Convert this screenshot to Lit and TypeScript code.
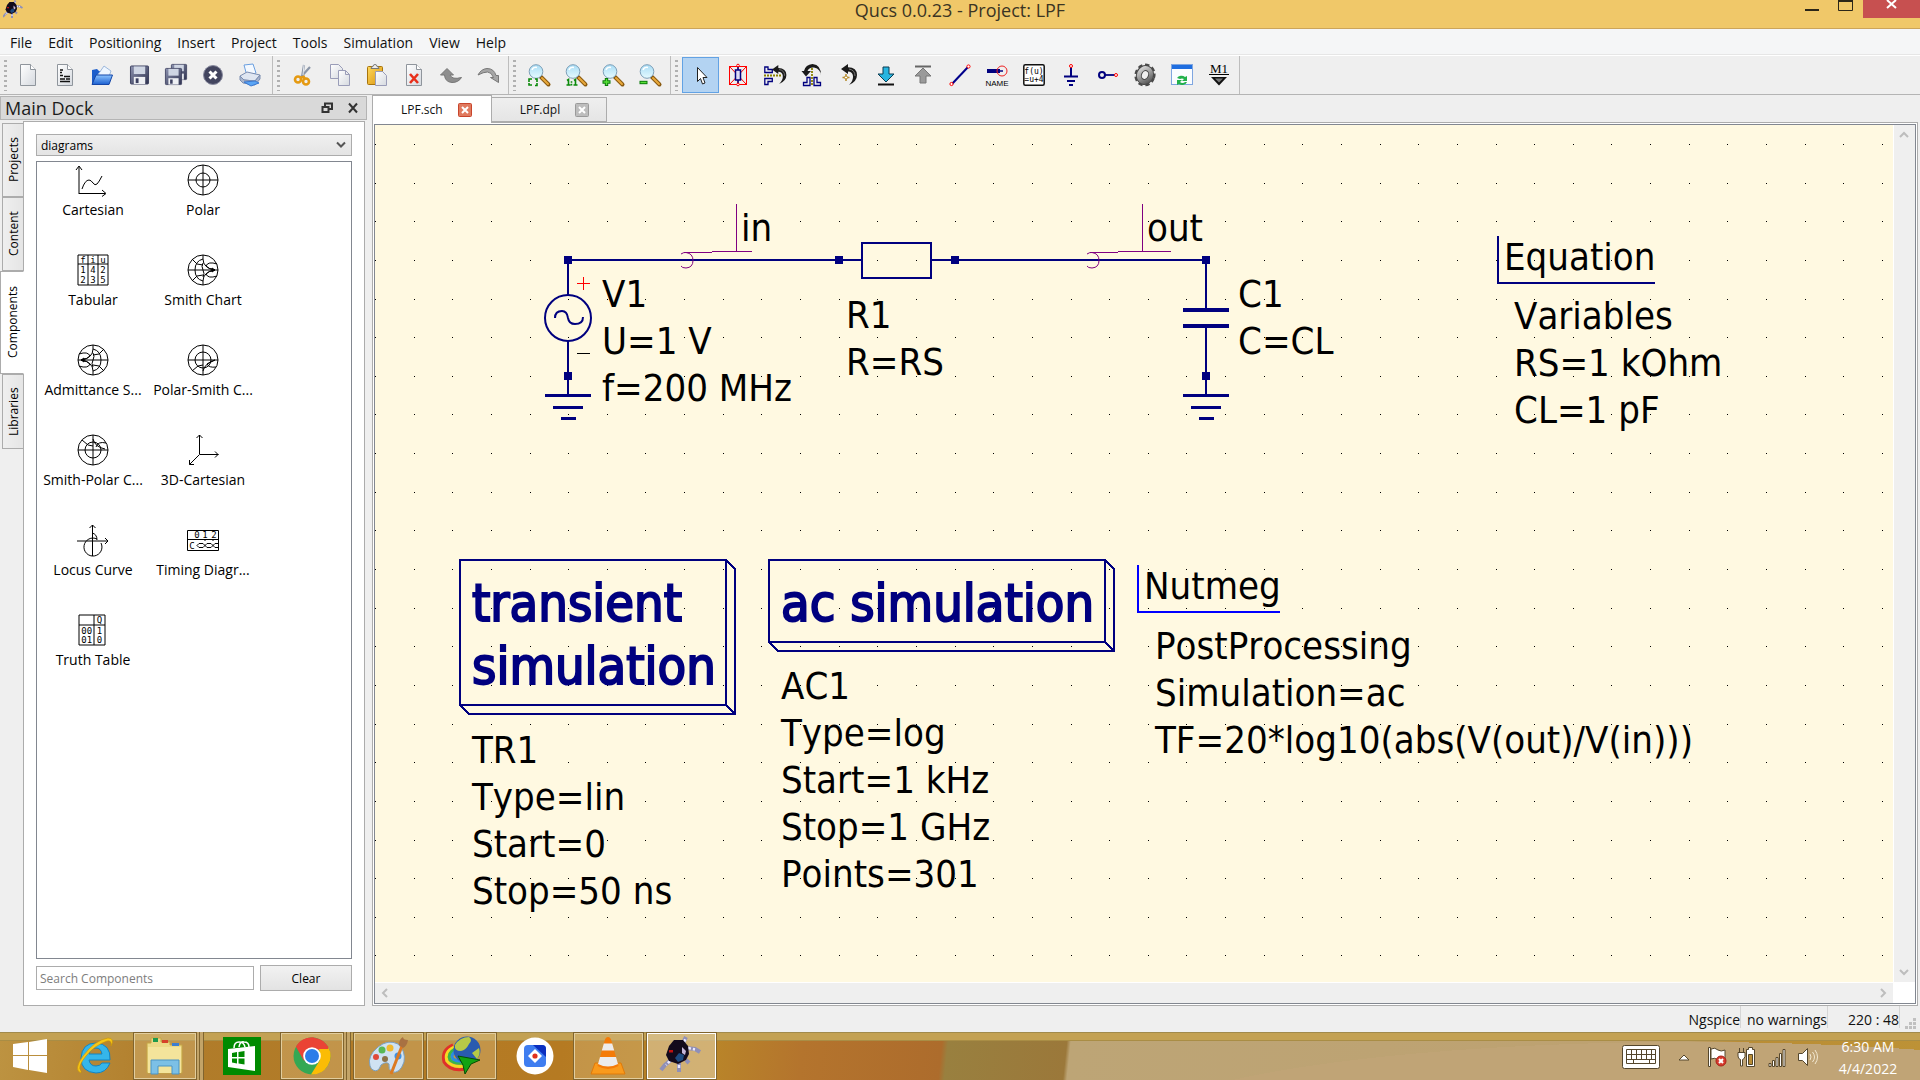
import { LitElement, html, svg, css, TemplateResult } from "lit";
import { customElement, state } from "lit/decorators.js";
import { classMap } from "lit/directives/class-map.js";

type Art = TemplateResult;

/* ---------- shared drawing pieces ---------- */

const page = svg`<path d="M3.5.5h10l5 5v16h-15z" fill="url(#paper)" stroke="#8f959c"/><path d="M13.5.5v5h5" fill="#fff" stroke="#8f959c"/>`;
const lens = svg`
  <path d="M13 13l7.500 7.500" stroke="#8a5a10" stroke-width="4" stroke-linecap="round"/>
  <path d="M14 14l6 6" stroke="#e9a93c" stroke-width="2" stroke-linecap="round"/>
  <circle cx="8" cy="7.500" r="6.800" fill="url(#glass)" stroke="#7d9fb8"/>
  <path d="M4 6a4 4 0 0 1 5-2.500" stroke="#fff" stroke-width="1.500" fill="none"/>`;
const defs = svg`<defs>
  <linearGradient id="paper" x1="0" y1="0" x2="1" y2="1"><stop offset="0" stop-color="#fff"/><stop offset="1" stop-color="#d5d9df"/></linearGradient>
  <linearGradient id="glass" x1="0" y1="0" x2="0" y2="1"><stop offset="0" stop-color="#a8dcf5"/><stop offset="1" stop-color="#e6fbff"/></linearGradient>
  <linearGradient id="disk" x1="0" y1="0" x2="1" y2="1"><stop offset="0" stop-color="#8d93b0"/><stop offset="1" stop-color="#2f3350"/></linearGradient>
  <linearGradient id="sky" x1="0" y1="0" x2="0" y2="1"><stop offset="0" stop-color="#8cc4ff"/><stop offset="1" stop-color="#1b5fd0"/></linearGradient>
  <linearGradient id="gold" x1="0" y1="0" x2="1" y2="1"><stop offset="0" stop-color="#ffd95c"/><stop offset="1" stop-color="#d99410"/></linearGradient>
  <linearGradient id="steel" x1="0" y1="0" x2="1" y2="1"><stop offset="0" stop-color="#ddd"/><stop offset="1" stop-color="#555"/></linearGradient>
</defs>`;
const floppy = (x: number, y: number, s: number) => svg`
  <g transform="translate(${x} ${y}) scale(${s})">
    <rect x=".5" y=".5" width="19" height="19" rx="1" fill="url(#disk)" stroke="#3c4060"/>
    <rect x="4" y="1" width="12" height="8" fill="#cfd6e4"/>
    <rect x="4" y="12" width="12" height="7.500" fill="#eef0f4"/>
    <rect x="6" y="13.500" width="3" height="5" fill="#3c4060"/>
  </g>`;
/* curved arrow: head on the left, tail tapering down on the right */
const curl = svg`<path d="M0 5L7 0v3.200q9 .3 9 7.800 0 6.500-8 10 4.500-4.500 4-9-.6-4.300-5-4.500V10z" fill="#1a1a1a"/><path d="M8 5q6 1 6 7" stroke="#777" fill="none"/>`;

const toolGroups: { label: string; art: Art; on?: boolean }[][] = [
  [
    { label: "New", art: page },
    { label: "New text", art: svg`${page}<path d="M6 6h3M6 8.500h2M6 11.500h3M10 12.500h6M6 15h5M12 15h4M6 17.500h10" stroke="#111" stroke-width="1.500"/>` },
    { label: "Open", art: svg`<path d="M1 20V6l5-1 2 2h10v13z" fill="#1d5ecb"/><path d="M6 12L13 2l7 5-3 8z" fill="#eef6ff" stroke="#9db8dc"/><path d="M1 20.500L5 11h16.500L18 20.500z" fill="url(#sky)" stroke="#1446a8"/>` },
    { label: "Save", art: floppy(2, 1.5, 0.95) },
    { label: "Save all", art: svg`${floppy(6, 0, 0.8)}${floppy(0, 4, 0.85)}` },
    { label: "Close", art: svg`<circle cx="11" cy="11" r="9.500" fill="#43455f" stroke="#8a8ca0"/><path d="M7.500 7.500l7 7M14.500 7.500l-7 7" stroke="#fff" stroke-width="3"/>` },
    { label: "Print", art: svg`<path d="M5 1l9-1 3 9-9 3z" fill="#f4f9ff" stroke="#6a9fe0"/><path d="M1 12l7-4 13 3-5 6-11-1z" fill="#dfe6f1" stroke="#7b8db0"/><path d="M1 12l4 4 11 1 5-6v4l-5 6-12-2-3-3z" fill="#a9b6ce" stroke="#7b8db0"/><path d="M5 18l11-1 4 2-8 3z" fill="#5aa5f5" stroke="#3a78d0"/>` },
  ],
  [
    { label: "Cut", art: svg`<path d="M12 1l-2 12M18 3L8 14" stroke="#8b96a8" stroke-width="2.200"/><path d="M12 1l-1 10" stroke="#e6eaf0"/><g fill="none" stroke="#e59a12" stroke-width="2.600"><circle cx="6" cy="15.500" r="3"/><circle cx="14" cy="17.500" r="3"/><path d="M8 14l5-1.500M11 12l2 3"/></g>` },
    { label: "Copy", art: svg`<path d="M1.500.5h8l4 4v10h-12z" fill="url(#paper)" stroke="#9a9db8"/><path d="M9.500 6.500h7l4 4v11h-11z" fill="url(#paper)" stroke="#9a9db8"/><path d="M16.500 6.500v4h4" fill="none" stroke="#9a9db8"/>` },
    { label: "Paste", art: svg`<rect x="1.500" y="2.500" width="15" height="18" rx="1" fill="url(#gold)" stroke="#a8740c"/><path d="M5 4.500q0-2 2-2 0-2 2-2t2 2q2 0 2 2z" fill="#eee" stroke="#777"/><path d="M9.500 7.500h7l4 4v10h-11z" fill="url(#paper)" stroke="#9a9db8"/>` },
    { label: "Delete", art: svg`${page}<path d="M7 10l8 9M15 10l-8 9" stroke="#e8301c" stroke-width="2.600"/>` },
    { label: "Undo", art: svg`<path d="M.5 11L7 4.500l6.500 6.500h-3.500q2 5 11.500 2.500-3 5-9.500 5-7-.5-7.500-7.500z" fill="#8e8e8e" stroke="#777"/>` },
    { label: "Redo", art: svg`<path d="M21.500 11.500v7l-8-5h3q-2-5.500-6-5.500-4 0-9.500 3 3-6 9-6.500 7 0 9 7z" fill="#a6a6a6" stroke="#777"/>` },
  ],
  [
    { label: "View all", art: svg`${lens}<path d="M1 18v-3h3M7 15h2v3M1 19v2h3M7 21.500h2V19" stroke="#0a8a0a" stroke-width="1.600" fill="none"/>` },
    { label: "View 1:1", art: svg`${lens}<path d="M2 16.500l1.500-1V21M1.500 21h4M9 16.500l1.500-1V21M8.500 21h4M6.500 17.200v1.600M6.500 19.800v1.600" stroke="#0a8a0a" stroke-width="1.600" fill="none"/>` },
    { label: "Zoom in", art: svg`${lens}<path d="M4.500 14v8M.5 18h8" stroke="#0a7a0a" stroke-width="3.400"/><path d="M4.500 15v6M1.500 18h6" stroke="#58e038" stroke-width="1.400"/>` },
    { label: "Zoom out", art: svg`${lens}<path d="M.5 18.500h8" stroke="#0a7a0a" stroke-width="3.400"/><path d="M1.500 18.500h6" stroke="#58e038" stroke-width="1.400"/>` },
  ],
  [
    { label: "Select", on: true, art: svg`<path d="M7.500 3.500v14l3-3 2 5.500 2.500-1-2-5.500h4z" fill="#fff" stroke="#222"/>` },
    { label: "Deactivate", art: svg`<path d="M11 0v5M11 17v5" stroke="#e00"/><rect x="2.500" y="2.500" width="17" height="18" fill="none" stroke="#f00"/><path d="M3 3l16 17M19 3L3 20" stroke="#f00"/><rect x="8.500" y="6" width="5" height="10" fill="#dcdcf5" stroke="#00007f" stroke-width="1.500"/><path d="M11 3v3M11 16v3" stroke="#00007f" stroke-width="1.500"/><circle cx="11" cy="1.500" r="1.300" fill="#fff" stroke="#f00"/><circle cx="11" cy="20.500" r="1.300" fill="#fff" stroke="#f00"/>` },
    { label: "Mirror X", art: svg`<path d="M.8 3v5.500h7.500V5.500H4V3zM.8 20.500v-6h7.500v3H4v3z" fill="none" stroke="#00007f" stroke-width="1.300"/><path d="M0 11.500h17" stroke="#8a8200" stroke-width="1.800" stroke-dasharray="2 1"/><g transform="translate(8 1) scale(.9)">${curl}</g>` },
    { label: "Mirror Y", art: svg`<path d="M2.500 21.500v-3h3.500v-5h3v8zM19.500 21.500v-3H16v-5h-3v8z" fill="none" stroke="#00007f" stroke-width="1.300"/><path d="M11 4v18" stroke="#8a8200" stroke-width="1.800" stroke-dasharray="2 1"/><path d="M20 12q0-7-7-8.500-5-.5-6.500 3.500H10l-5 5.500L.5 7H3q1.500-6.500 8.500-7 9 .8 8.500 12z" fill="#1a1a1a"/>` },
    { label: "Rotate", art: svg`<g transform="translate(3 0)">${curl}</g><path d="M8 10v7M4.500 13.500h7" stroke="#b58a2a" stroke-width="1.500"/><circle cx="8" cy="13.500" r="1.500" fill="#fff" stroke="#b58a2a"/>` },
    { label: "Push into", art: svg`<path d="M8 3h6v7h5l-8 8-8-8h5z" fill="#27b5e0" stroke="#0a3d52"/><path d="M3 20.500h16" stroke="#111" stroke-width="2"/>` },
    { label: "Pop out", art: svg`<path d="M3 2.500h16" stroke="#666" stroke-width="2"/><path d="M11 4l8 8h-5v7H8v-7H3z" fill="#9a9a9a" stroke="#777"/>` },
    { label: "Wire", art: svg`<path d="M3 20L19 3" stroke="#00008b" stroke-width="2"/><circle cx="2.500" cy="20" r="1.600" fill="#fff" stroke="#f00"/><circle cx="19.500" cy="2.500" r="1.600" fill="#fff" stroke="#f00"/>` },
    { label: "Wire label", art: svg`<path d="M1 7h13" stroke="#00007f" stroke-width="4"/><path d="M13 7h4" stroke="#00007f" stroke-width="1.500"/><circle cx="16" cy="7" r="5" fill="none" stroke="#e22"/><text x="11" y="22" font-family="Liberation Sans, sans-serif" font-size="8" text-anchor="middle" fill="#000">NAME</text>` },
    { label: "Equation", art: svg`<rect x=".8" y=".8" width="20.400" height="20.400" rx="1.500" fill="#fff" stroke="#111" stroke-width="1.500"/><text x="11" y="10" font-family="DejaVu Sans Mono, monospace" font-size="8" text-anchor="middle">f(u)</text><text x="11" y="18" font-family="DejaVu Sans Mono, monospace" font-size="8" text-anchor="middle">=u+4</text>` },
    { label: "Ground", art: svg`<path d="M11 3v9M4 12.500h14M7 17h8M9 21h4" stroke="#00007f" stroke-width="2" fill="none"/><circle cx="11" cy="2" r="1.500" fill="#fff" stroke="#f00"/>` },
    { label: "Port", art: svg`<path d="M8 11h10" stroke="#00007f" stroke-width="1.800"/><circle cx="5" cy="11" r="3" fill="none" stroke="#00007f" stroke-width="2"/><circle cx="19" cy="11" r="1.500" fill="#fff" stroke="#f00"/>` },
    { label: "Simulate", art: svg`<g transform="rotate(20 11 11)"><ellipse cx="11" cy="11" rx="8.500" ry="9.500" fill="none" stroke="#4a4a4a" stroke-width="4" stroke-dasharray="4 2.500"/><ellipse cx="11" cy="11" rx="6" ry="7" fill="none" stroke="#4a4a4a" stroke-width="6"/><ellipse cx="11" cy="11" rx="6" ry="7" fill="none" stroke="url(#steel)" stroke-width="4"/></g>` },
    { label: "View data", art: svg`<rect x=".5" y=".5" width="21" height="20" fill="#fafcff" stroke="#7fa6e0"/><rect x="1" y="1" width="20" height="4" fill="#1f6ee0"/><path d="M6 14a5 4 0 0 1 8-1l2-1v5h-5l2-2a3 2 0 0 0-4 0zM16 18a5 4 0 0 1-8 2l-2 1v-5h5l-2 2a3 2 0 0 0 5 0z" fill="#22b14c"/>` },
    { label: "Marker", art: svg`<text x="11" y="9" font-family="Liberation Serif, serif" font-size="13" text-anchor="middle">M1</text><path d="M1 10.500h20" stroke="#000"/><path d="M3 13h16l-8 8.500z" fill="#111"/><path d="M7 14.500h8l-4 4z" fill="#777"/>` },
  ],
];

const ring = svg`<circle cx="16" cy="16" r="15"/>`;
const cross = svg`<path d="M1 16h30M16 1v30"/>`;
const smith = svg`${ring}<path d="M1 16h30M25 14l3 2-3 2z"/><path d="M16 1v4M16 27v4M16 5q-8 2-8 11t8 11M16 9q-2 3 0 7t0 7M5 5l5 5 6 1M5 27l5-5 6-1M16 5q0 9 12 11M16 27q0-9 12-11M30 10q-9-3-11 2 2 3 9 4M30 22q-9 3-11-2 2-3 9-4"/>`;
const tiny = (x: number, y: number, t: string) => svg`<text x=${x} y=${y}>${t}</text>`;
const diagrams: { name: string; art: Art }[] = [
  { name: "Cartesian", art: svg`<path d="M2 30V3M-1 6l3-4 3 4M2 29.500h26M25 26l4 3.500-4 3M5 25q3-9 7-9 2 0 4 3t4 1 5-8"/>` },
  { name: "Polar", art: svg`${ring}<circle cx="16" cy="16" r="7"/>${cross}` },
  { name: "Tabular", art: svg`<path d="M1 1h30v30H1zM1 10h30M11 1v30M21 1v30"/>${[["f", "i", "u"], ["1", "4", "2"], ["2", "3", "5"]].map((r, j) => r.map((t, i) => tiny(6 + i * 10, [8.5, 19, 29][j], t)))}` },
  { name: "Smith Chart", art: smith },
  { name: "Admittance S...", art: svg`<g transform="matrix(-1 0 0 1 32 0)">${smith}</g>` },
  { name: "Polar-Smith C...", art: svg`${ring}<circle cx="16" cy="16" r="8"/>${cross}<path d="M5 27l6-5 5-1M16 27q2-8 12-11M29 23q-7 1-9-3l8-4"/>` },
  { name: "Smith-Polar C...", art: svg`${ring}<circle cx="16" cy="16" r="8"/>${cross}<path d="M5 6l6 5 5 1M16 5q2 8 12 10M29 9q-8-2-10 4"/>` },
  { name: "3D-Cartesian", art: svg`<path d="M12.500 20V1M9.500 4l3-3 3 3M12.500 20.500h19M28 17.500l3 3-3 3M12.500 20.500l-10 10M2.500 26v4.500H7"/>` },
  { name: "Locus Curve", art: svg`<path d="M15.500 32V1M12.500 4l3-3 3 3M0 17h31M28 14l3 3-3 3"/><path d="M20 15a9 9 0 1 0 4 4M20 16q0-6-5-7"/>` },
  { name: "Timing Diagr...", art: svg`<path d="M.5 6.500h31v20H.5zM.5 15.500h31M10 21.500l2-2h4l4 4h4l4-4h3M10 21.500l2 2h4l4-4h4l4 4h3M18 15v2M26 15v2"/>${tiny(10, 14, "0")}${tiny(18, 14, "1")}${tiny(27, 14, "2")}${tiny(5, 25, "C")}` },
  { name: "Truth Table", art: svg`<path d="M2 1h26v30H2zM2 11h26M17 1v30"/>${tiny(22.5, 9, "Q")}${tiny(7, 20, "0")}${tiny(12.5, 20, "0")}${tiny(22.5, 20, "1")}${tiny(7, 29, "0")}${tiny(12.5, 29, "1")}${tiny(22.5, 29, "0")}` },
];

const spider = svg`
  <path d="M22 7l3-6M25 12l9 1 5 3M10 24l-6 5-4 5M18 26v10M25 24l3 3" stroke="#8f8fb8" stroke-width="4" fill="none"/>
  <path d="M23 6l2-4M27 12l7 1.500M9 25l-4 4M18 29v5" stroke="#eceaff" stroke-width="2.500" stroke-dasharray="3 2" fill="none"/>
  <path d="M8 10l5-6h9l5 6 1 8-3 6-8 4-9-3-3-6z" fill="#130a1c"/>
  <path d="M14 22l4-5 5 2-1 5-5 2z" fill="#1d4a80"/><path d="M21 11l4 4-1 4-3-2z" fill="#c5b6d8"/>
  <rect x="8" y="14" width="4" height="2.500" fill="#c01010"/>`;

/* ---------- dock with the component palette ---------- */

@customElement("main-dock")
class MainDock extends LitElement {
  @state() private tab = "Components";

  static styles = css`
    :host { display: flex; flex-direction: column; font: 12px "Open Sans", sans-serif; color: #000; }
    button, input, select { font: inherit; color: inherit; }
    .title { display: flex; align-items: center; height: 22px; padding: 0 0 0 4px; border: 1px solid #b4b4b4; background: #d9d9d9; font-size: 18px; line-height: 22px; color: #1c1c1c; }
    .title span { flex: 1; }
    .title button { width: 26px; height: 18px; padding: 0; border: 0; background: none; display: grid; place-items: center; }
    .title svg { width: 12px; height: 12px; fill: none; stroke: #333; stroke-width: 2; }
    .body { flex: 1; display: flex; min-height: 0; margin-right: 2px; padding-top: 1px; }
    .tabs { display: flex; flex-direction: column; width: 24px; padding-top: 2px; margin-right: -1px; z-index: 1; }
    .tab { writing-mode: vertical-rl; transform: rotate(180deg); height: 74px; width: 22px; margin-left: 2px; padding: 0; border: 1px solid #acacac; background: linear-gradient(90deg, #e5e5e5, #efefef); line-height: 19px; text-align: center; }
    .tab.on { width: 24px; height: 103px; margin-left: 0; background: #fff; border-left-color: #fff; }
    .tab.last { height: 75px; }
    .panel { flex: 1; display: flex; flex-direction: column; min-width: 0; border: 1px solid #acacac; background: #fff; padding: 12px; }
    .pick { position: relative; display: flex; margin-bottom: 5px; }
    .pick select { flex: 1; height: 22px; padding: 0 4px; border: 1px solid #acacac; border-radius: 0; appearance: none; background: linear-gradient(#f0f0f0, #e4e4e4); }
    .pick svg { position: absolute; right: 6px; top: 7px; width: 10px; height: 8px; fill: none; stroke: #555; stroke-width: 2; pointer-events: none; }
    .list { flex: 1; display: grid; grid-template-columns: repeat(auto-fill, 110px); grid-auto-rows: 90px; align-content: start; padding-left: 1px; border: 1px solid #828790; overflow: hidden; }
    .item { display: flex; flex-direction: column; align-items: center; gap: 4px; padding: 2px 0 0; border: 0; background: none; font-size: 14px; line-height: 20px; white-space: nowrap; }
    .item svg { width: 32px; height: 32px; overflow: visible; fill: none; stroke: #000; stroke-width: 1; }
    .item text { font: 9px "DejaVu Sans Mono", monospace; text-anchor: middle; fill: #000; stroke: none; }
    .find { display: flex; align-items: center; gap: 6px; padding-top: 6px; margin-bottom: 2px; }
    .find input { flex: 1; min-width: 0; height: 24px; box-sizing: border-box; padding: 0 3px; border: 1px solid #acacac; }
    .find input::placeholder { color: #7d7d7d; opacity: 1; }
    .find button { width: 92px; height: 26px; padding: 0; border: 1px solid #acacac; background: linear-gradient(#f2f2f2, #e3e3e3); }
  `;

  render() {
    const tabs = ["Projects", "Content", "Components", "Libraries"];
    return html`
      <div class="title">
        <span>Main Dock</span>
        <button aria-label="Float"><svg viewBox="0 0 12 12"><path d="M4 4V1.500h7V7H8M1.500 5h6v5h-6z"/></svg></button>
        <button aria-label="Close dock"><svg viewBox="0 0 12 12"><path d="M2 1.500l8 9M10 1.500l-8 9"/></svg></button>
      </div>
      <div class="body">
        <div class="tabs" role="tablist">
          ${tabs.map((t) => html`<button role="tab" aria-selected=${this.tab === t} class=${classMap({ tab: true, on: this.tab === t, last: t === "Libraries" })} @click=${() => (this.tab = t)}>${t}</button>`)}
        </div>
        <div class="panel">
          <div class="pick">
            <select aria-label="Component group"><option>diagrams</option></select>
            <svg viewBox="0 0 10 8"><path d="M1 1.500l4 4 4-4"/></svg>
          </div>
          <div class="list">
            ${diagrams.map((d) => html`<button class="item"><svg viewBox="0 0 32 32">${d.art}</svg>${d.name}</button>`)}
          </div>
          <div class="find">
            <input type="text" aria-label="Search Components" placeholder="Search Components" />
            <button>Clear</button>
          </div>
        </div>
      </div>`;
  }
}

/* ---------- schematic canvas ---------- */

const GRID = 38.64;
const gridDots = (() => {
  let d = "";
  for (let j = 0; j < 60; j++)
    for (let i = 0; i < 100; i++) d += `M${Math.round(i * GRID)} ${Math.round(19 + j * GRID)}h1v1h-1z`;
  return d;
})();

const lines = (x: number, y: number, rows: string[]) => rows.map((r, i) => svg`<text x=${x} y=${y + i * 47}>${r}</text>`);
const node = (x: number, y: number) => svg`<rect class="node" x=${x - 4} y=${y - 4} width="8" height="8"/>`;
const ground = (x: number) => svg`<path class="bar3" d="M${x - 23} 395.500h46M${x - 15} 407.500h30M${x - 7} 418.500h15"/>`;
const netLabel = (x: number, y: number, end: number, name: string) => svg`
  <path class="net" d="M${x}.5 204v47M${x - 24} 251.500H${end}M${x - 52} 252.500h28"/>
  <path class="net round" d="M${x - 55} 254q3-2 5-1.500 7 1 7 8t-7 7.500q-4 0-5-2"/>
  <text x=${x + 5} y=${y}>${name}</text>`;
const box = (x: number, y: number, w: number, h: number) => svg`
  <path class="wire" d="M${x} ${y}h${w}v${h}h-${w}zM${x + w} ${y}l9 9v${h}h-${w}l-9-9M${x + w} ${y + h}l9 9"/>`;

@customElement("schematic-view")
class SchematicView extends LitElement {
  static styles = css`
    :host { display: grid; grid-template-columns: minmax(0, 1fr) 21px; grid-template-rows: minmax(0, 1fr) 20px; gap: 1px; background: #fff; border: 1px solid #828790; }
    .canvas { display: block; width: 100%; height: 100%; background: #fff9e1; shape-rendering: crispEdges; }
    text { font: 38px "DejaVu Sans Condensed", "Open Sans", sans-serif; font-kerning: none; fill: #000; }
    .big text { font-size: 52px; fill: #00007f; stroke: #00007f; stroke-width: 2px; }
    .wire { fill: none; stroke: #00007f; stroke-width: 2; }
    .bar3 { fill: none; stroke: #00007f; stroke-width: 3; }
    .bar4 { fill: none; stroke: #00007f; stroke-width: 4; }
    .node { fill: #00007f; }
    .net { fill: none; stroke: #800080; stroke-width: 1; }
    .round { shape-rendering: auto; }
    .blue { fill: none; stroke: #0000ff; stroke-width: 2; }
    .scroll { display: flex; justify-content: space-between; background: #efefef; }
    .v { flex-direction: column; }
    .scroll button { width: 20px; height: 20px; padding: 0; border: 0; background: none; display: grid; place-items: center; }
    .scroll svg { width: 10px; height: 10px; fill: none; stroke: #bdbdbd; stroke-width: 2; }
  `;

  render() {
    const arrow = (label: string, d: string) => html`<button aria-label=${label}><svg viewBox="0 0 10 10"><path d=${d}/></svg></button>`;
    return html`
      <svg class="canvas">
        <path d=${gridDots} fill="#000"/>
        <g transform="translate(-375 -125)">
          <path class="wire" d="M568 260H862M931 260H1206M862 243h69v35h-69zM568 260v35M568 341v54M1206 260v49M1206 327v68"/>
          <circle class="wire round" cx="568" cy="318" r="23"/>
          <path class="wire round" d="M555 318q0-7 7-7 5 0 6 7 1 6 7 6 8 0 8-7"/>
          <path d="M577 283.500h13M583.500 277v13" stroke="#f00"/>
          <path d="M577 353.500h13" stroke="#000"/>
          ${node(568, 260)}${node(568, 376)}${node(839, 260)}${node(955, 260)}${node(1206, 260)}${node(1206, 376)}
          <path class="bar4" d="M1183 310h46M1183 326h46"/>
          ${ground(568)}${ground(1206)}
          ${netLabel(736, 241, 752, "in")}${netLabel(1142, 241, 1171, "out")}
          ${lines(602, 307, ["V1", "U=1 V", "f=200 MHz"])}
          ${lines(846, 328, ["R1", "R=RS"])}
          ${lines(1238, 307, ["C1", "C=CL"])}
          <path class="wire" d="M1498 236v47h157"/>
          ${lines(1504, 270, ["Equation"])}
          ${lines(1514, 329, ["Variables", "RS=1 kOhm", "CL=1 pF"])}
          ${box(460, 560, 266, 145)}${box(769, 560, 336, 82)}
          <g class="big">
            <text x="472" y="621">transient</text>
            <text x="472" y="684">simulation</text>
            <text x="781" y="621">ac simulation</text>
          </g>
          ${lines(472, 763, ["TR1", "Type=lin", "Start=0", "Stop=50 ns"])}
          ${lines(781, 699, ["AC1", "Type=log", "Start=1 kHz", "Stop=1 GHz", "Points=301"])}
          <path class="blue" d="M1138 565v47h142"/>
          ${lines(1144, 599, ["Nutmeg"])}
          ${lines(1155, 659, ["PostProcessing", "Simulation=ac", "TF=20*log10(abs(V(out)/V(in)))"])}
        </g>
      </svg>
      <div class="scroll v">${arrow("Up", "M1 7l4-4 4 4")}${arrow("Down", "M1 3l4 4 4-4")}</div>
      <div class="scroll">${arrow("Left", "M7 1L3 5l4 4")}${arrow("Right", "M3 1l4 4-4 4")}</div>`;
  }
}

/* ---------- desktop task bar ---------- */

const tasks: { name: string; look: string; art: Art }[] = [
  { name: "Internet Explorer", look: "", art: svg`<path d="M35 24H14q1 6 7 6 4 0 6-3h8q-4 10-14 10Q6 36 6 22 7 7 21 7q15 1 14 17zM14 18h13q-1-6-6-6t-7 6z" fill="#35b6ea" stroke="#1583c0"/><path d="M6 37Q-2 34 8 20 20 4 33 2q7 0 3 8 1-6-4-5-12 4-21 15T6 35z" fill="#f8c716" stroke="#c99305" stroke-width=".6"/>` },
  { name: "File Explorer", look: "open stack", art: svg`<path d="M2 7h4V2h10v4h9v3h12v28H2z" fill="#ecd987" stroke="#c4a544"/><path d="M8 2h5v4H8z" fill="#1d9a4d"/><path d="M17 4h6v3h-6z" fill="#d6412a"/><path d="M27 7h7v3h-7z" fill="#3d7ed0"/><path d="M3 11h33v26H3z" fill="#f4e49b"/><path d="M6 38V24h28v14h-7v-8H13v8z" fill="#7cc0e6" stroke="#4a94c4"/>` },
  { name: "Store", look: "", art: svg`<rect x="1" y="1" width="38" height="38" fill="#008a00"/><path d="M6 13l27-3v25L6 31z" fill="#fff"/><path d="M12 12q0-6 5-6t6 5M17 11q1-6 5-5 5 0 5 5" fill="none" stroke="#fff" stroke-width="1.500"/><path d="M10 17l5-1v5h-5zM16.500 16l6-1v6h-6zM10 22.500h5v5l-5-1zM16.500 22.500h6v6l-6-1z" fill="#008a00"/>` },
  { name: "Chrome", look: "open stack", art: svg`<circle cx="20" cy="20" r="18.500" fill="#34a853"/><path d="M4 10.800A18.500 18.500 0 0 1 36 10.800L28 14H20z" fill="#ea4335"/><path d="M4 10.800A18.500 18.500 0 0 1 20 1.500h2L20 12l-8 13z" fill="#ea4335"/><path d="M36 10.800A18.500 18.500 0 0 1 19 38.500L28 24l-1-12z" fill="#fbbc05"/><path d="M20 11.500h16.200" stroke="#ea4335" stroke-width="3"/><circle cx="20" cy="20" r="8.800" fill="#fff"/><circle cx="20" cy="20" r="7" fill="#2b7de9"/>` },
  { name: "Paint", look: "open", art: svg`<path d="M2 30Q-1 20 10 11q10-8 20-3 8 7 6 18-4 12-12 10-4-3-3-8-3-3-8 1-3 8-8 5-2-1-3-4z" fill="#cfe2f2" stroke="#7ba0bf"/><circle cx="8" cy="21" r="3" fill="#e04a3a"/><circle cx="14" cy="14" r="3.500" fill="#59b856"/><circle cx="22" cy="12" r="3.500" fill="#f1b92e"/><circle cx="30" cy="20" r="3.500" fill="#3f8fe0"/><circle cx="17" cy="23" r="3" fill="#8d7247"/><path d="M23 38L34 10" stroke="#dc7a22" stroke-width="3"/><path d="M31 9q0-6 4-8 0 3 5 3-1 6-5 8z" fill="#a87142"/>` },
  { name: "Download Manager", look: "open", art: svg`<path d="M12 9Q0 14 3 26q6 10 22 7" fill="none" stroke="#e0302a" stroke-width="3"/><path d="M13 11Q3 16 6 25q5 7 18 5" fill="none" stroke="#f6d822" stroke-width="3"/><path d="M14 13Q6 17 9 24q4 4 15 3" fill="none" stroke="#3ab54a" stroke-width="3"/><path d="M15 15q-6 4-3 8 4 3 12 2" fill="none" stroke="#2a8de0" stroke-width="3"/><circle cx="26" cy="14" r="13.500" fill="#2a5bb0"/><path d="M14 9q5-8 14-8 4 3 0 7-3 6-8 7-7 0-6-6zM31 17l7-5q2 6-2 11z" fill="#b7c947"/><path d="M17 20l22 4-9 4-6 10-2-9z" fill="#12a312" stroke="#064d06"/>` },
  { name: "Player", look: "", art: svg`<circle cx="20" cy="20" r="18.500" fill="#fff"/><rect x="9" y="9" width="22" height="22" rx="4" fill="#3f7df0"/><path d="M18 9h9q4 0 4 4v8z" fill="#0b2fc0"/><path d="M20 13l7 7-7 7-7-7z" fill="#fff"/><circle cx="20" cy="20" r="2.600" fill="#e0301e"/>` },
  { name: "VLC", look: "open", art: svg`<path d="M7 27h26l4 11H3z" fill="#f99a1c" stroke="#e07a08"/><path d="M20 1q2.500 0 3.500 4l7 25q-10.500 6-21 0l7-25q1-4 3.500-4z" fill="#f47b08"/><path d="M15.800 7.500h8.400l2 7H13.800zM12 21h16l2 7q-10 5-20 0z" fill="#ececec"/>` },
  { name: "Qucs", look: "open active", art: spider },
];

@customElement("task-bar")
class TaskBar extends LitElement {
  static styles = css`
    :host { display: flex; align-items: stretch; height: 48px; color: #fff; font: 14px/22px "Open Sans", sans-serif;
      background: linear-gradient(#a18a4c 0 1px, #c3a153 1px 8px, #a98d45 8px 9px, transparent 9px),
        radial-gradient(ellipse 560px 90px at 1690px 100px, #c0a476 0 100%, transparent 100%) 0 0 no-repeat,
        linear-gradient(96deg, #bd9341 0, #b07c2a 180px, #b57a22 560px, #b98529 710px, #b4742d 800px, #ad6c2c 938px, #99803f 944px, #9b783a 1062px, #bda576 1066px, #bda170 1680px, #b98d35 1730px, #bd9236 100%); }
    button { border: 0; padding: 0; background: none; font: inherit; color: inherit; }
    svg { display: block; }
    .start { width: 59px; display: grid; place-items: center; }
    .start svg { width: 34px; height: 34px; fill: #fff; }
    .task { width: 74px; display: grid; place-items: center start; padding-left: 16px; box-sizing: border-box; }
    .task svg { width: 40px; height: 40px; overflow: visible; }
    .open { width: 71px; margin-right: 2px; padding-left: 14px; border: 1px solid #80642e; box-shadow: inset 0 0 0 1px #e2cd9d; background: #d9bb8066; }
    .stack { width: 64px; margin-right: 9px; padding-left: 11px; box-shadow: inset 0 0 0 1px #e2cd9d, 2px 0 0 #c3a468, 3px 0 0 #80642e, 6px 0 0 #c3a468, 7px 0 0 #80642e; }
    .active { background: #dec79aaa; box-shadow: inset 0 0 0 1px #fff; }
    .fill { flex: 1; }
    .tray { display: flex; align-items: center; gap: 12px; padding-top: 2px; }
    .tray svg { overflow: visible; fill: #fff; stroke: #54462c; stroke-width: 1; }
    .tray .kbd { width: 38px; height: 24px; margin-right: 6px; }
    .tray .up { width: 12px; height: 8px; margin-right: 6px; }
    .tray .sm { width: 18px; height: 22px; }
    .clock { width: 104px; text-align: center; padding: 4px 0 0; align-self: start; }
    .clock span { display: block; }
  `;

  render() {
    return html`
      <button class="start" aria-label="Start"><svg viewBox="0 0 34 34"><path d="M0 5l15-2v13H0zM16 3l18-3v16H16zM0 17h15v14L0 28zM16 17h18v17l-18-3z"/></svg></button>
      ${tasks.map((t) => html`<button class="task ${t.look}" aria-label=${t.name}><svg viewBox="0 0 40 40">${t.art}</svg></button>`)}
      <div class="fill"></div>
      <div class="tray">
        <svg class="kbd" viewBox="0 0 38 24"><rect x=".5" y=".5" width="37" height="23" rx="2"/><path d="M4.500 4.500h29v14h-29zM4.500 9.500h29M4.500 14.500h29M9.500 4v10M14.500 4v10M19.500 4v10M24.500 4v10M29.500 4v10M11.500 14v5M27.500 14v5"/></svg>
        <svg class="up" viewBox="0 0 12 8"><path d="M1 7l5-5 5 5z"/></svg>
        <svg class="sm" viewBox="0 0 18 22"><path d="M.5 1.500h2v19h-2zM3 3q4-2 7 1 3 2 7 0v10q-4 2-7 0-3-3-7-1z"/><circle cx="13" cy="15" r="5" fill="#d63a2e" stroke="#a92318"/><path d="M11 13l4 4M15 13l-4 4" stroke="#fff" stroke-width="2"/></svg>
        <svg class="sm" viewBox="0 0 18 22"><path d="M8.500 3.500h2v-2h4v2h2v17h-8z"/><path d="M10.500 8.500h4v10h-4z" fill="#b98d35"/><path d="M1.500 6V2M5.500 6V2M0 6.500h7v4q-1 3-2.500 3V20h-2v-6.500Q0 13 0 10z"/></svg>
        <svg class="sm" viewBox="0 0 18 22"><path d="M1 17.500h2v3H1zM4.500 14.500h2v6h-2zM8 11.500h2v9H8zM11.500 7.500h2v13h-2zM15 3.500h2v17h-2z"/></svg>
        <svg class="sm" viewBox="0 0 18 22"><path d="M.5 7.500h4l5-5v17l-5-5h-4z"/><path d="M12 8q2 3 0 6M14.500 6q4 5 0 10M17 4q5 7 0 14" fill="none" stroke="#f3e9d2"/></svg>
      </div>
      <div class="clock"><span>6:30 AM</span><span>4/4/2022</span></div>`;
  }
}

/* ---------- application window ---------- */

@customElement("app-root")
class AppRoot extends LitElement {
  @state() private doc = "LPF.sch";

  static styles = css`
    :host { display: flex; flex-direction: column; height: 100vh; overflow: hidden; background: #efefef; color: #111; font: 14px "Open Sans", sans-serif; }
    button { font: inherit; color: inherit; padding: 0; border: 0; background: none; }
    svg { display: block; }
    .titlebar { display: grid; grid-template-columns: 1fr auto 1fr; height: 28px; border-bottom: 1px solid #cca55a; background: #f0c869; }
    .titlebar .logo { width: 20px; height: 20px; margin: 0 3px; }
    .titlebar h1 { margin: 0; font-size: 18px; line-height: 20px; font-weight: 400; color: #3b3423; }
    .win { display: flex; justify-content: flex-end; }
    .win button { width: 33px; height: 18px; }
    .win .x { width: 57px; background: #c75050; }
    .win svg { width: 100%; height: 18px; fill: none; stroke: #2b2618; stroke-width: 2; }
    .menu { display: flex; height: 25px; padding-left: 2px; border-bottom: 1px solid #e6e6e6; background: #f5f6f7; }
    .menu button { padding: 0 8px; line-height: 28px; height: 25px; display: flex; }
    .tools { display: flex; height: 38px; border-top: 1px solid #fff; border-bottom: 1px solid #b4b4b4; }
    .group { display: flex; align-items: center; padding-right: 2px; border-right: 1px solid #bdbdbd; }
    .group::before { content: ""; width: 3px; height: 31px; margin: 0 4px; background: repeating-linear-gradient(#b0b0b0 0 2px, transparent 2px 5px); }
    .group:first-child { padding-right: 4px; }
    .group:first-child::before { margin-right: 2px; }
    .tool { width: 37px; height: 36px; display: grid; place-items: center; }
    .tool svg { width: 22px; height: 22px; overflow: visible; }
    .tool.on { box-shadow: inset 0 0 0 1px #62a2e4; background: #b3d3f2; }
    .work { flex: 1; display: flex; min-height: 0; gap: 5px; padding-right: 2px; }
    main-dock { width: 367px; padding-top: 1px; }
    .docs { flex: 1; min-width: 0; display: flex; flex-direction: column; }
    .doctabs { display: flex; align-items: flex-end; height: 27px; z-index: 1; }
    .doctab { display: flex; align-items: center; height: 25px; padding: 0 17px 0 28px; gap: 15px; border: 1px solid #acacac; border-left: 0; background: linear-gradient(#efefef, #e5e5e5); font-size: 12px; }
    .doctab.on { height: 28px; margin-bottom: -1px; padding-right: 19px; border: 1px solid #acacac; border-bottom: 0; background: #fff; }
    .doctab svg { width: 14px; height: 14px; }
    .frame { flex: 1; min-height: 0; display: flex; border: 1px solid #acacac; background: #fff; padding: 1px; }
    schematic-view { flex: 1; min-width: 0; }
    .status { display: flex; justify-content: flex-end; height: 26px; padding-right: 3px; box-sizing: border-box; line-height: 27px; }
    .status span { padding-left: 6px; border-right: 1px solid #d5d5d5; height: 22px; }
    .status .pos { padding-left: 20px; }
    .status svg { width: 12px; height: 12px; margin: 12px 0 0 5px; fill: #c0c0c0; }
  `;

  render() {
    const menus = ["File", "Edit", "Positioning", "Insert", "Project", "Tools", "Simulation", "View", "Help"];
    return html`
      <header class="titlebar">
        <svg class="logo" viewBox="0 0 40 40">${spider}</svg>
        <h1>Qucs 0.0.23 - Project: LPF</h1>
        <div class="win">
          <button aria-label="Minimize"><svg viewBox="0 0 33 18"><path d="M8 10h14"/></svg></button>
          <button aria-label="Restore"><svg viewBox="0 0 33 18"><path d="M8 1h15" /><path d="M8.500 0v10.500h14V0" stroke-width="1"/></svg></button>
          <button class="x" aria-label="Close"><svg viewBox="0 0 57 18"><path d="M24 0l9 8M33 0l-9 8" stroke="#fff"/></svg></button>
        </div>
      </header>
      <nav class="menu">${menus.map((m) => html`<button>${m}</button>`)}</nav>
      <div class="tools">
        ${toolGroups.map((g) => html`<div class="group">${g.map((t) => html`<button class=${classMap({ tool: true, on: !!t.on })} aria-label=${t.label}><svg viewBox="0 0 22 22">${defs}${t.art}</svg></button>`)}</div>`)}
      </div>
      <div class="work">
        <main-dock></main-dock>
        <div class="docs">
          <div class="doctabs" role="tablist">
            ${["LPF.sch", "LPF.dpl"].map((d) => html`<button role="tab" aria-selected=${this.doc === d} class=${classMap({ doctab: true, on: this.doc === d })} @click=${() => (this.doc = d)}>${d}
              <svg viewBox="0 0 14 14"><rect x=".5" y=".5" width="13" height="13" rx="1" fill=${this.doc === d ? "#e07a5f" : "#bdbdbd"} stroke=${this.doc === d ? "#c8452c" : "#9a9a9a"}/><path d="M4 4l6 6M10 4l-6 6" stroke="#fff" stroke-width="2"/></svg></button>`)}
          </div>
          <div class="frame"><schematic-view></schematic-view></div>
        </div>
      </div>
      <footer class="status">
        <span>Ngspice</span><span>no warnings</span><span class="pos">220 : 48</span>
        <svg viewBox="0 0 12 12"><path d="M8 0h3v3H8zM4 4h3v3H4zM8 4h3v3H8zM0 8h3v3H0zM4 8h3v3H4zM8 8h3v3H8z"/></svg>
      </footer>
      <task-bar></task-bar>`;
  }
}
